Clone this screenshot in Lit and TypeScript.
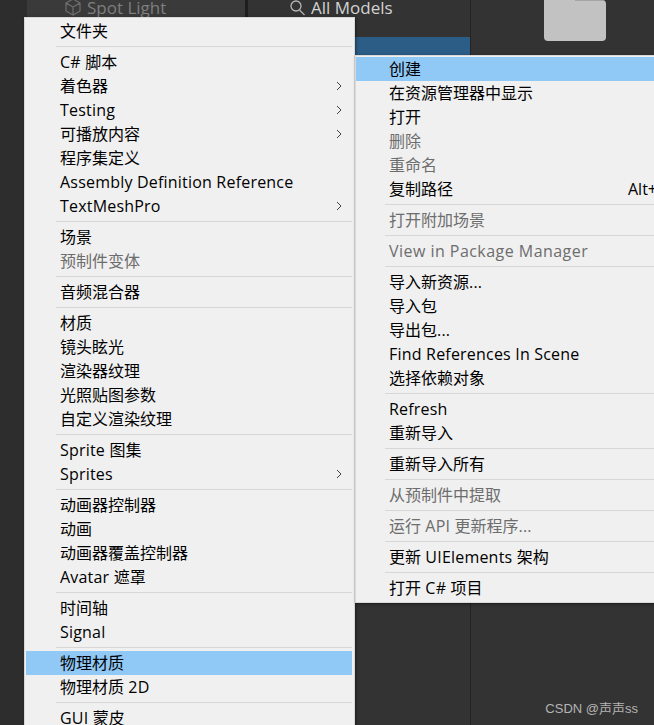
import { LitElement, html, css } from "lit";
import { customElement } from "lit/decorators.js";

type Item = { t: string; sub?: boolean; off?: boolean; hi?: boolean; key?: string; wide?: boolean } | null;

const leftItems: Item[] = [
  { t: "文件夹" }, null,
  { t: "C# 脚本" }, { t: "着色器", sub: true }, { t: "Testing", sub: true }, { t: "可播放内容", sub: true },
  { t: "程序集定义" }, { t: "Assembly Definition Reference" }, { t: "TextMeshPro", sub: true }, null,
  { t: "场景" }, { t: "预制件变体", off: true }, null,
  { t: "音频混合器" }, null,
  { t: "材质" }, { t: "镜头眩光" }, { t: "渲染器纹理" }, { t: "光照贴图参数" }, { t: "自定义渲染纹理" }, null,
  { t: "Sprite 图集" }, { t: "Sprites", sub: true }, null,
  { t: "动画器控制器" }, { t: "动画" }, { t: "动画器覆盖控制器" }, { t: "Avatar 遮罩" }, null,
  { t: "时间轴" }, { t: "Signal" }, null,
  { t: "物理材质", hi: true }, { t: "物理材质 2D" }, null,
  { t: "GUI 蒙皮" },
];

const rightItems: Item[] = [
  { t: "创建", hi: true }, { t: "在资源管理器中显示" }, { t: "打开" }, { t: "删除", off: true }, { t: "重命名", off: true },
  { t: "复制路径", key: "Alt+Ctrl+C" }, null,
  { t: "打开附加场景", off: true }, null,
  { t: "View in Package Manager", off: true, wide: true }, null,
  { t: "导入新资源..." }, { t: "导入包" }, { t: "导出包..." }, { t: "Find References In Scene" }, { t: "选择依赖对象" }, null,
  { t: "Refresh" }, { t: "重新导入" }, null,
  { t: "重新导入所有" }, null,
  { t: "从预制件中提取", off: true }, null,
  { t: "运行 API 更新程序...", off: true }, null,
  { t: "更新 UIElements 架构" }, null,
  { t: "打开 C# 项目" },
];

const runs = (t: string) =>
  t.split(/([\x00-\x7f]+)/).filter(Boolean).map((s) =>
    /^[\x00-\x7f]+$/.test(s) ? html`<span class="latin">${s}</span>` : s
  );

@customElement("app-root")
export class AppRoot extends LitElement {
  static styles = css`
    :host {
      display: block;
      position: relative;
      width: 654px;
      height: 725px;
      overflow: hidden;
      background: #333333;
      font-family: "Open Sans", "Noto Sans CJK SC", sans-serif;
      font-size: 16px;
    }
    .topbar { display: flex; height: 37px; }
    .left-gap { width: 27px; background: #2d2d2d; }
    .tab {
      width: 218px; height: 37px; background: #3a3a3a; color: #7e7e7e;
      display: flex; align-items: flex-start; gap: 5px; padding-left: 37px; box-sizing: border-box;
    }
    .spot { font-size: 17px; line-height: 16px; }
    .divider { width: 3px; background: #1e1e1e; height: 37px; }
    .models {
      width: 222px; color: #d2d2d2; display: flex; align-items: flex-start; gap: 4px;
      padding-left: 41px; box-sizing: border-box; font-size: 17px; line-height: 16px;
    }
    .blue { position: absolute; left: 248px; top: 37px; width: 222px; height: 18px; background: #2c5d87; }
    .vline { position: absolute; left: 470px; top: 0; width: 1px; height: 725px; background: #232323; }
    .leftcol { position: absolute; left: 0; top: 0; width: 24px; height: 725px; background: #2d2d2d; }
    .folder {
      position: absolute; left: 544px; top: 0; width: 62px; height: 41px;
      background: #c2c2c2; border-radius: 0 4px 4px 4px;
    }
    .folder::after {
      content: ""; position: absolute; left: 31px; right: 3px; top: 0; height: 1px; background: #a4a4a4;
    }
    .menu {
      position: absolute; box-sizing: border-box; background: #f0f0f0; color: #000;
      border: 1px solid #d8d8d8;
      box-shadow: 1px 1px 3px rgba(0,0,0,.45);
    }
    .menu.l { left: 24px; top: 17px; width: 331px; height: 720px; padding: 1px 2px 1px 1px; }
    .menu.r { left: 355px; top: 55px; width: 321px; height: 548px; padding: 1px 0; }
    .row { height: 24px; line-height: 24px; padding-left: 33px; white-space: nowrap; position: relative; }
    .menu.l .row { padding-left: 34px; }
    .latin { letter-spacing: 0.2px; }
    .row.wide .latin { letter-spacing: 0.46px; }
    .row.off { color: #6d6d6d; }
    .row.hi { background: #90c8f6; }
    .sep { height: 1px; background: #d7d7d7; margin: 3px 0 3px 29px; }
    .menu.l .sep { margin-left: 30px; }
    .arrow { position: absolute; right: 8px; top: 7px; width: 10px; height: 10px; }
    .key { position: absolute; left: 272px; top: 0; }
    .mark {
      position: absolute; right: 16px; bottom: 8px; color: #b4b4b4; font-size: 13px;
      font-family: "Liberation Sans", "Noto Sans CJK SC", sans-serif;
    }
  `;

  private menu(cls: string, items: Item[]) {
    return html`<div class="menu ${cls}">
      ${items.map((i) =>
        i === null
          ? html`<div class="sep"></div>`
          : html`<div class="row ${i.off ? "off" : ""} ${i.hi ? "hi" : ""} ${i.wide ? "wide" : ""}">
              ${runs(i.t)}
              ${i.key ? html`<span class="key">${i.key}</span>` : ""}
              ${i.sub
                ? html`<svg class="arrow" viewBox="0 0 10 10"><path d="M3 1l4 4-4 4" fill="none" stroke="#444" stroke-width="1"/></svg>`
                : ""}
            </div>`
      )}
    </div>`;
  }

  render() {
    return html`
      <div class="leftcol"></div>
      <div class="topbar">
        <div class="left-gap"></div>
        <div class="tab">
          <svg width="18" height="17" viewBox="0 0 18 17" fill="none" stroke="#6e6e6e" stroke-width="1.2">
            <path d="M9 -1l7 4v8l-7 4-7-4V3zM2 3l7 4 7-4M9 7v8"/>
          </svg>
          <span class="spot">Spot Light</span>
        </div>
        <div class="divider"></div>
        <div class="models">
          <svg width="18" height="16" viewBox="0 0 18 16" fill="none" stroke="#b5b5b5" stroke-width="1.3">
            <circle cx="7" cy="6" r="5"/><path d="M10.5 10l5 5"/>
          </svg>
          <span>All Models</span>
        </div>
      </div>
      <div class="blue"></div>
      <div class="vline"></div>
      <div class="folder"></div>
      ${this.menu("l", leftItems)}
      ${this.menu("r", rightItems)}
      <div class="mark">CSDN @声声ss</div>
    `;
  }
}
